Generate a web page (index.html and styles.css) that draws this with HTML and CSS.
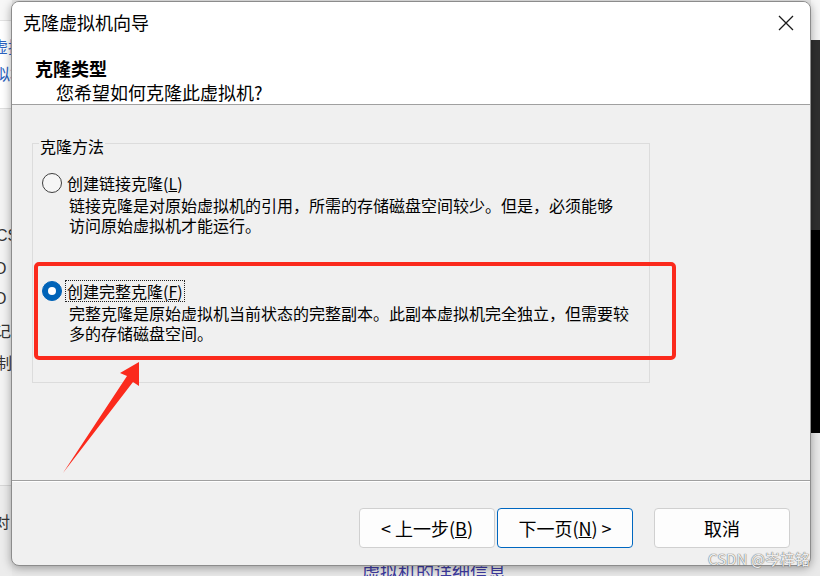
FILE: index.html
```html
<!DOCTYPE html>
<html lang="zh-CN">
<head>
  <meta charset="UTF-8">
  <title>克隆虚拟机向导</title>
  <link rel="stylesheet" href="styles.css">
</head>
<body>
  <div class="desk">
    <!-- app window behind the dialog -->
    <div class="backdrop">
      <div class="back-left">
        <div class="bl-top"></div>
        <div class="bl-head">
          <span class="frag frag-a">虚拟</span>
          <span class="frag frag-b">拟机</span>
        </div>
        <div class="bl-list">
          <span class="frag frag-c">CS</span>
          <span class="frag frag-d">O</span>
          <span class="frag frag-e">O</span>
          <span class="frag frag-f">记</span>
          <span class="frag frag-g">制</span>
        </div>
        <div class="bl-foot">
          <span class="frag frag-h">对</span>
        </div>
      </div>
      <div class="back-right">
        <div class="br-top"></div>
        <div class="br-dark"></div>
        <div class="br-black"></div>
        <div class="br-light"></div>
      </div>
      <div class="back-bottom">虚拟机的详细信息</div>
    </div>

    <div class="dialog">
      <div class="titlebar">
        <span class="title">克隆虚拟机向导</span>
        <svg class="close" width="16" height="16" viewBox="0 0 16 16">
          <path d="M1 1 L15 15 M15 1 L1 15" stroke="#1a1a1a" stroke-width="1.3" fill="none"/>
        </svg>
      </div>
      <div class="header">
        <div class="h-title">克隆类型</div>
        <div class="h-sub">您希望如何克隆此虚拟机?</div>
      </div>

      <div class="content">
        <fieldset class="group">
          <legend>克隆方法</legend>
          <div class="option">
            <div class="opt-row">
              <span class="radio"></span>
              <span class="opt-label">创建链接克隆(<u>L</u>)</span>
            </div>
            <div class="opt-desc">
              <div>链接克隆是对原始虚拟机的引用，所需的存储磁盘空间较少。但是，必须能够</div>
              <div>访问原始虚拟机才能运行。</div>
            </div>
          </div>
          <div class="option">
            <div class="opt-row">
              <span class="radio checked"></span>
              <span class="opt-label focus">创建完整克隆(<u>F</u>)</span>
            </div>
            <div class="opt-desc">
              <div>完整克隆是原始虚拟机当前状态的完整副本。此副本虚拟机完全独立，但需要较</div>
              <div>多的存储磁盘空间。</div>
            </div>
          </div>
        </fieldset>
      </div>

      <div class="footer">
        <button class="btn">&lt; 上一步(<u>B</u>)</button>
        <button class="btn primary">下一页(<u>N</u>) &gt;</button>
        <button class="btn cancel">取消</button>
      </div>
    </div>

    <!-- annotation drawn over the screenshot -->
    <div class="mark-box"></div>
    <svg class="arrow" width="95" height="125" viewBox="0 0 95 125">
      <polygon points="84,7 65,18 72,21 8,118 78,27 84,31" fill="#fb2a1c"/>
    </svg>
    <div class="watermark">CSDN @岑梓铭</div>
  </div>
</body>
</html>
```

FILE: styles.css
```css
body {
  margin: 0;
  background: #e9e9e9;
  font-family: "Noto Sans CJK SC", "Microsoft YaHei", sans-serif;
  color: #000;
}
.desk {
  position: relative;
  width: 820px;
  height: 576px;
  overflow: hidden;
}

/* ---- background window ---- */
.backdrop {
  position: absolute;
  inset: 0;
  background: #e9e9e9;
}
.back-left {
  position: absolute;
  left: 0;
  top: 0;
  width: 12px;
  height: 576px;
  display: flex;
  flex-direction: column;
  overflow: hidden;
}
.bl-top {
  height: 20px;
  background: #f7f7f7;
  border-bottom: 1px solid #e2e2e2;
}
.bl-head {
  position: relative;
  height: 87px;
  background: #fff;
  border-bottom: 1px solid #dedede;
}
.bl-list {
  position: relative;
  height: 376px;
  background: #f3f3f3;
  border-bottom: 1px solid #d6d6d6;
}
.bl-foot {
  position: relative;
  flex: 1;
  background: #ececec;
}
.frag {
  position: absolute;
  font-size: 16px;
  line-height: 20px;
  white-space: nowrap;
  color: #333;
}
.frag-a { left: -8px; top: 15px; color: #2b62c0; }
.frag-b { left: -6px; top: 42px; color: #2b62c0; }
.frag-c { left: -4px; top: 117px; font-family: "Liberation Sans", sans-serif; }
.frag-d { left: -6px; top: 150px; font-family: "Liberation Sans", sans-serif; }
.frag-e { left: -6px; top: 180px; font-family: "Liberation Sans", sans-serif; }
.frag-f { left: -5px; top: 211px; }
.frag-g { left: -4px; top: 243px; }
.frag-h { left: -6px; top: 25px; }

.back-right {
  position: absolute;
  left: 811px;
  top: 0;
  width: 9px;
  height: 576px;
  display: flex;
  flex-direction: column;
}
.br-top {
  height: 40px;
  background: #f4f4f4;
  border-top: 20px solid #f7f7f7;
  box-sizing: border-box;
}
.br-dark { height: 190px; background: #2f2f2f; }
.br-black { height: 203px; background: #000; }
.br-light { flex: 1; background: #e9e9e9; }

.back-bottom {
  position: absolute;
  left: 362px;
  top: 559px;
  font-size: 18px;
  line-height: 24px;
  color: #3d3aa0;
  white-space: nowrap;
}

/* ---- dialog window ---- */
.dialog {
  position: absolute;
  left: 11px;
  top: 1px;
  width: 800px;
  height: 565px;
  box-sizing: border-box;
  border: 1px solid #8c8c8c;
  border-radius: 8px;
  background: #f0f0f0;
  box-shadow: 0 2px 10px rgba(0, 0, 0, 0.35);
  display: flex;
  flex-direction: column;
  overflow: hidden;
}
.titlebar {
  height: 40px;
  background: #fff;
  display: flex;
  align-items: center;
  justify-content: space-between;
  padding: 0 16px 0 11px;
}
.title {
  font-size: 18px;
  line-height: 40px;
}
.close {
  display: block;
  margin-top: 1px;
}
.header {
  background: #fff;
  padding: 14px 0 0 0;
  height: 48px;
  border-bottom: 1px solid #a0a0a0;
}
.h-title {
  font-size: 18px;
  line-height: 24px;
  font-weight: 700;
  padding-left: 23px;
}
.h-sub {
  font-size: 18px;
  line-height: 24px;
  padding-left: 44px;
}

.content {
  flex: 1;
  padding: 26px 0 0 20px;
}
.group {
  box-sizing: border-box;
  width: 618px;
  height: 252px;
  margin: 0;
  padding: 17px 0 0 0;
  border: 1px solid #dcdcdc;
}
.group legend {
  font-size: 16px;
  line-height: 20px;
  padding: 5px 1px 0;
  margin-left: 6px;
}
.option {
  margin-bottom: 46px;
  padding-left: 9px;
}
.opt-row {
  display: flex;
  align-items: center;
  gap: 4px;
  height: 20px;
}
.radio {
  width: 18px;
  height: 18px;
  border: 1px solid #3f3f3f;
  border-radius: 50%;
  box-sizing: content-box;
  background: #f6f6f6;
}
.radio.checked {
  background: #0063b8;
  border-color: #0063b8;
  position: relative;
}
.radio.checked::after {
  content: "";
  position: absolute;
  left: 5px;
  top: 5px;
  width: 8px;
  height: 8px;
  border-radius: 50%;
  background: #fff;
}
.opt-label {
  font-size: 16px;
  line-height: 20px;
  padding: 0 1px;
  white-space: nowrap;
}
.opt-label.focus {
  outline: 1px dotted #222;
  outline-offset: 0;
}
.opt-desc {
  font-size: 16px;
  line-height: 20px;
  margin: 2px 0 0 27px;
  white-space: nowrap;
}

.footer {
  height: 85px;
  box-sizing: border-box;
  border-top: 1px solid #a0a0a0;
  box-shadow: inset 0 1px 0 #fff;
  display: flex;
  justify-content: flex-end;
  align-items: flex-start;
  padding: 27px 20px 0 0;
  gap: 2px;
}
.btn {
  width: 136px;
  height: 40px;
  box-sizing: border-box;
  border: 1px solid #d0d0d0;
  border-radius: 4px;
  background: #fdfdfd;
  font-family: inherit;
  font-size: 18px;
  color: #000;
  padding: 0;
}
.btn.primary {
  border-color: #0067c0;
}
.btn.cancel {
  margin-left: 19px;
}

/* ---- annotation ---- */
.mark-box {
  position: absolute;
  left: 34px;
  top: 262px;
  width: 642px;
  height: 98px;
  box-sizing: border-box;
  border: 4px solid #fb2a1c;
  border-radius: 5px;
}
.arrow {
  position: absolute;
  left: 55px;
  top: 355px;
}
.watermark {
  position: absolute;
  left: 708px;
  top: 549px;
  font-size: 15px;
  line-height: 20px;
  color: rgba(255, 255, 255, 0.9);
  text-shadow: 0 0 1px #666, 0 0 1px #666;
  white-space: nowrap;
}
```
